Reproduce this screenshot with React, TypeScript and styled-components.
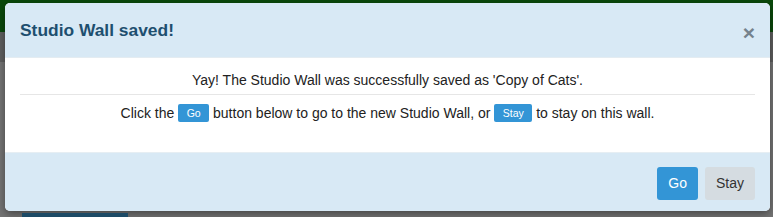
import React from "react";
import styled, { createGlobalStyle } from "styled-components";

const Global = createGlobalStyle`
  html, body { margin: 0; padding: 0; }
  body {
    width: 773px;
    height: 217px;
    overflow: hidden;
    font-family: "Liberation Sans", Arial, sans-serif;
    background: #6f6f6f;
  }
`;

const Backdrop = styled.div`
  width: 773px;
  height: 217px;
  display: flex;
  flex-direction: column;
  background: linear-gradient(#0a490b 0 32px, #5f5f5f 32px 62px, #747474 62px);
  overflow: hidden;
`;

const Modal = styled.div`
  margin: 3px 3px 0 5px;
  width: 765px;
  height: 208px;
  display: flex;
  flex-direction: column;
  border-radius: 5px;
  overflow: hidden;
  background: #fff;
  box-shadow: 0 3px 9px rgba(0, 0, 0, 0.4);
  flex-shrink: 0;
`;

const Header = styled.div`
  height: 55px;
  box-sizing: border-box;
  display: flex;
  align-items: center;
  justify-content: space-between;
  padding: 0 15px 0 15px;
  background: #d8e9f5;
  border-bottom: 1px solid #e4ecf1;
`;

const Title = styled.h4`
  margin: 0 0 1px 0;
  font-size: 17.4px;
  font-weight: bold;
  color: #1e4f6f;
  line-height: 20px;
`;

const Close = styled.span`
  font-size: 21px;
  font-weight: bold;
  color: #75828c;
  line-height: 1;
  margin-top: 4px;
`;

const Body = styled.div`
  flex: 1;
  padding: 12px 15px 0 15px;
  text-align: center;
  font-size: 14px;
  color: #222;
`;

const Line = styled.p`
  margin: 0;
  line-height: 20px;
`;

const Rule = styled.hr`
  border: 0;
  border-top: 1px solid #e6e6e6;
  margin: 4px 0 8px 0;
`;

const InlineButton = styled.span`
  display: inline-block;
  vertical-align: middle;
  height: 18px;
  line-height: 18px;
  padding: 0 8.5px;
  margin-top: -2px;
  font-size: 10.5px;
  color: #fff;
  background: #3395d6;
  border-radius: 2px;
`;

const Footer = styled.div`
  height: 59px;
  box-sizing: border-box;
  display: flex;
  justify-content: flex-end;
  align-items: flex-start;
  gap: 7px;
  padding: 14px 15px 0 15px;
  background: #d8e9f5;
  border-top: 1px solid #e6eef3;
`;

const Button = styled.button<{ $primary?: boolean }>`
  font-family: "Liberation Sans", Arial, sans-serif;
  font-size: 14px;
  line-height: 21px;
  padding: 6px 11px;
  border: 0;
  border-radius: 3px;
  color: ${(p) => (p.$primary ? "#fff" : "#333")};
  background: ${(p) => (p.$primary ? "#3395d6" : "#d5dce1")};
`;

const PageRow = styled.div`
  display: flex;
  gap: 6px;
  padding: 2px 0 0 22px;
  height: 10px;
`;

const PageChip = styled.div<{ $w: number; $dark?: boolean }>`
  width: ${(p) => p.$w}px;
  height: 10px;
  background: ${(p) => (p.$dark ? "#1c4a66" : "#666")};
`;

export default function App() {
  return (
    <>
      <Global />
      <Backdrop>
        <Modal>
          <Header>
            <Title>Studio Wall saved!</Title>
            <Close>×</Close>
          </Header>
          <Body>
            <Line>Yay! The Studio Wall was successfully saved as 'Copy of Cats'.</Line>
            <Rule />
            <Line>
              Click the <InlineButton>Go</InlineButton> button below to go to the new Studio Wall, or{" "}
              <InlineButton>Stay</InlineButton> to stay on this wall.
            </Line>
          </Body>
          <Footer>
            <Button $primary>Go</Button>
            <Button>Stay</Button>
          </Footer>
        </Modal>
        <PageRow>
          <PageChip $w={106} $dark />
        </PageRow>
      </Backdrop>
    </>
  );
}
